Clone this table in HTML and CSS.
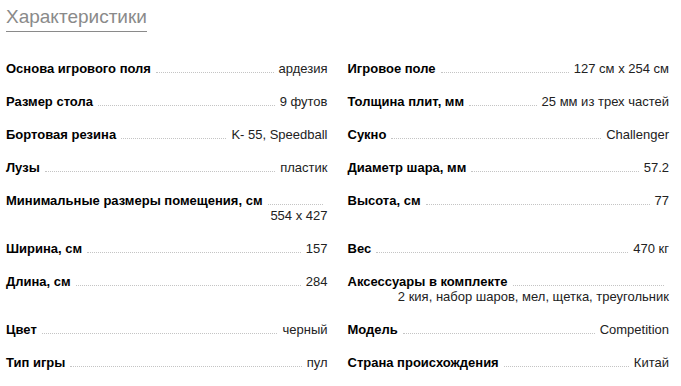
FILE: index.html
```html
<!DOCTYPE html>
<html lang="ru">
<head>
<meta charset="utf-8">
<title>Характеристики</title>
<link rel="stylesheet" href="styles.css">
</head>
<body>
<div class="specs">
  <h2 class="specs-title">Характеристики</h2>
  <div class="specs-grid">
    <div class="spec"><span class="spec-label">Основа игрового поля</span><span class="spec-leader"></span><span class="spec-value">ардезия</span></div>
    <div class="spec"><span class="spec-label">Игровое поле</span><span class="spec-leader"></span><span class="spec-value">127 см x 254 см</span></div>
    <div class="spec"><span class="spec-label">Размер стола</span><span class="spec-leader"></span><span class="spec-value">9 футов</span></div>
    <div class="spec"><span class="spec-label">Толщина плит, мм</span><span class="spec-leader"></span><span class="spec-value">25 мм из трех частей</span></div>
    <div class="spec"><span class="spec-label">Бортовая резина</span><span class="spec-leader"></span><span class="spec-value">K- 55, Speedball</span></div>
    <div class="spec"><span class="spec-label">Сукно</span><span class="spec-leader"></span><span class="spec-value">Challenger</span></div>
    <div class="spec"><span class="spec-label">Лузы</span><span class="spec-leader"></span><span class="spec-value">пластик</span></div>
    <div class="spec"><span class="spec-label">Диаметр шара, мм</span><span class="spec-leader"></span><span class="spec-value">57.2</span></div>
    <div class="spec"><span class="spec-label">Минимальные размеры помещения, см</span><span class="spec-leader"></span><span class="spec-value">554 x 427</span></div>
    <div class="spec"><span class="spec-label">Высота, см</span><span class="spec-leader"></span><span class="spec-value">77</span></div>
    <div class="spec"><span class="spec-label">Ширина, см</span><span class="spec-leader"></span><span class="spec-value">157</span></div>
    <div class="spec"><span class="spec-label">Вес</span><span class="spec-leader"></span><span class="spec-value">470 кг</span></div>
    <div class="spec"><span class="spec-label">Длина, см</span><span class="spec-leader"></span><span class="spec-value">284</span></div>
    <div class="spec"><span class="spec-label">Аксессуары в комплекте</span><span class="spec-leader"></span><span class="spec-value">2 кия, набор шаров, мел, щетка, треугольник</span></div>
    <div class="spec"><span class="spec-label">Цвет</span><span class="spec-leader"></span><span class="spec-value">черный</span></div>
    <div class="spec"><span class="spec-label">Модель</span><span class="spec-leader"></span><span class="spec-value">Competition</span></div>
    <div class="spec"><span class="spec-label">Тип игры</span><span class="spec-leader"></span><span class="spec-value">пул</span></div>
    <div class="spec"><span class="spec-label">Страна происхождения</span><span class="spec-leader"></span><span class="spec-value">Китай</span></div>
  </div>
</div>
</body>
</html>
```

FILE: styles.css
```css
html, body {
  margin: 0;
  padding: 0;
  background: #fff;
}

.specs {
  padding: 0 12px 0 6px;
  font-family: "Liberation Sans", Arial, sans-serif;
  color: #222;
}

.specs-title {
  display: inline-block;
  margin: 0;
  padding: 6px 0 4px;
  font-size: 19px;
  line-height: 21px;
  font-weight: normal;
  color: #8a8a8a;
  border-bottom: 1px solid #8a8a8a;
}

.specs-grid {
  display: grid;
  grid-template-columns: 1fr 1fr;
  column-gap: 20px;
  row-gap: 18px;
  margin-top: 29px;
}

.spec {
  display: flex;
  flex-wrap: wrap;
  align-items: flex-start;
  font-size: 13px;
  line-height: 15px;
}

.spec-label {
  font-weight: bold;
  color: #000;
}

.spec-leader {
  flex: 1 0 20px;
  height: 11px;
  margin: 0 5px;
  border-bottom: 1px dotted #c4c4c4;
}

.spec-value {
  margin-left: auto;
  text-align: right;
  color: #222;
}
```
